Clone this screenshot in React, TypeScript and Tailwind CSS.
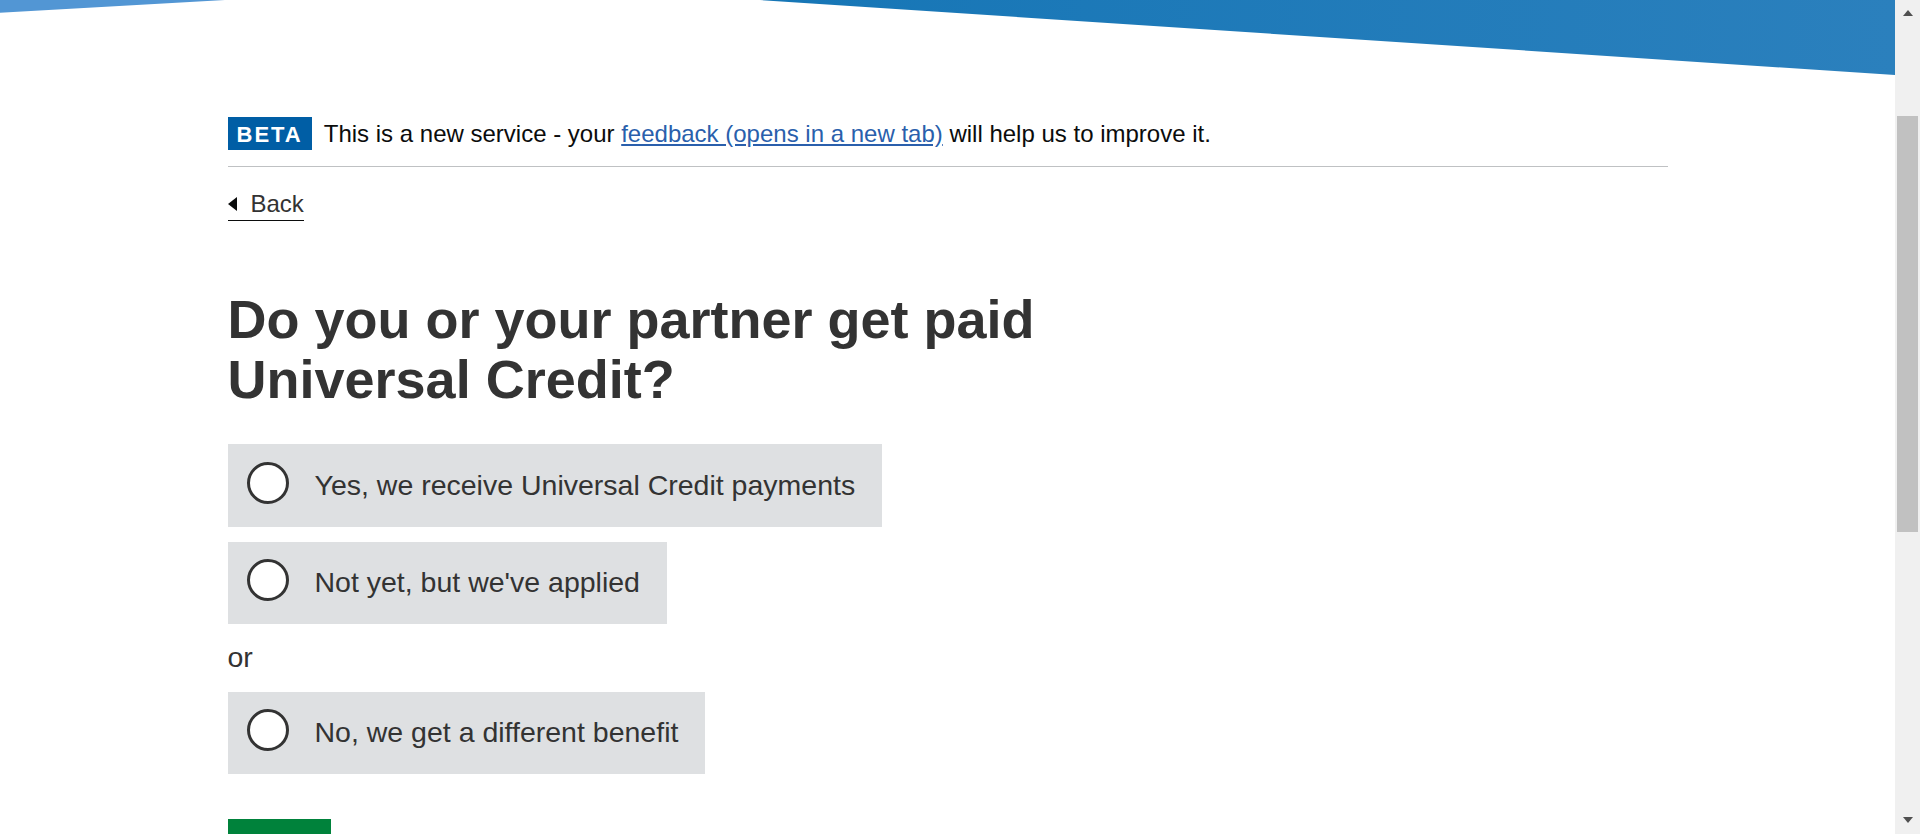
import React from 'react';

const options = [
  'Yes, we receive Universal Credit payments',
  "Not yet, but we've applied",
];

const RadioBox: React.FC<{ label: string }> = ({ label }) => (
  <label className="flex items-start bg-[#dee0e2] pl-[19px] pr-[27px] py-[22.5px] text-[28.5px] leading-[37.5px] text-[#333] cursor-pointer">
    <span className="-mt-[5px] mr-[26px] h-[42px] w-[42px] shrink-0 rounded-full border-[3px] border-[#333] bg-white" />
    <span>{label}</span>
  </label>
);

const App: React.FC = () => {
  return (
    <div className="flex h-[834px] w-full overflow-hidden bg-white font-['Liberation_Sans',Arial,sans-serif]">
      <div className="flex min-w-0 flex-1 flex-col">
        {/* top decoration */}
        <svg className="block h-[77px] w-full shrink-0" viewBox="0 0 1895 77" preserveAspectRatio="none">
          <defs>
            <linearGradient id="topband" x1="0" y1="0" x2="1" y2="0">
              <stop offset="0" stopColor="#1676b6" />
              <stop offset="1" stopColor="#2b80bd" />
            </linearGradient>
          </defs>
          <polygon points="0,0 225,0 0,12.7" fill="#5296d4" />
          <polygon points="760,0 1895,0 1895,75" fill="url(#topband)" />
        </svg>

        <div className="mx-auto w-[1440px]">
          {/* phase banner */}
          <div className="flex items-baseline gap-[12px] border-b border-[#bfc1c3] pt-[40px] pb-[16px]">
            <strong className="bg-[#005ea5] px-[9px] pt-[3px] text-[22px] font-bold leading-[30px] tracking-[2px] text-white">
              BETA
            </strong>
            <span className="text-[24px] leading-[30px] text-[#0b0c0c]">
              This is a new service - your{' '}
              <a href="#" className="text-[#2a5fac] underline">
                feedback (opens in a new tab)
              </a>{' '}
              will help us to improve it.
            </span>
          </div>

          {/* back link */}
          <a
            href="#"
            className="mt-[22px] flex w-fit items-center border-b border-[#0b0c0c] pb-[1px] text-[24px] leading-[30px] text-[#333]"
          >
            <span className="mr-[14px] h-0 w-0 border-y-[7px] border-r-[9px] border-y-transparent border-r-[#0b0c0c]" />
            Back
          </a>

          <div className="w-[960px]">
            <h1 className="mt-[68px] text-[54px] font-bold leading-[60px] text-[#333]">
              Do you or your partner get paid Universal Credit?
            </h1>

            <div className="mt-[35px] flex flex-col items-start gap-[15px]">
              {options.map((o) => (
                <RadioBox key={o} label={o} />
              ))}
              <p className="text-[28.5px] leading-[37.5px] text-[#333]">or</p>
              <RadioBox label="No, we get a different benefit" />
              <button className="mt-[30px] bg-[#00823b] px-[22.5px] pt-[15px] pb-[7.5px] text-[28.5px] leading-[35.6px] text-white shadow-[0_3px_0_#003618]">
                Next
              </button>
            </div>
          </div>
        </div>
      </div>

      {/* scrollbar */}
      <div className="flex w-[25px] shrink-0 flex-col items-center bg-[#f0f0f0] pt-[10px] pb-[11px]">
        <span className="h-0 w-0 border-x-[5.5px] border-b-[6px] border-x-transparent border-b-[#505050]" />
        <span className="mt-[100px] h-[416px] w-[21px] bg-[#c1c1c1]" />
        <span className="flex-1" />
        <span className="h-0 w-0 border-x-[5.5px] border-t-[6px] border-x-transparent border-t-[#505050]" />
      </div>
    </div>
  );
};

export default App;
